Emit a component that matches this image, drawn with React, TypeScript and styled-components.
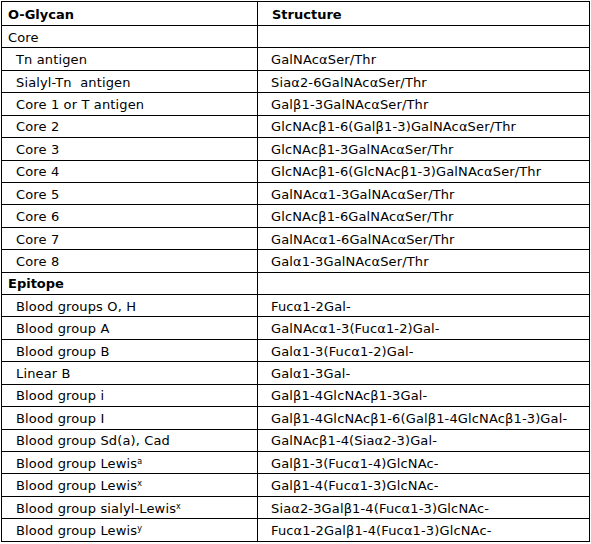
import React, { FunctionComponent } from 'react';
import styled, { createGlobalStyle } from 'styled-components';

const GlobalStyle = createGlobalStyle`
    body {
        margin: 0;
        background: #fff;
        font-family: "DejaVu Sans", Verdana, sans-serif;
        color: #000;
    }
`;

const Wrapper = styled.div`
    padding: 1px 0 0 1px;
`;

const Table = styled.table`
    border-collapse: collapse;
    width: 589px;
    height: 541px;
    font-size: 13px;
    letter-spacing: 0.14px;
    table-layout: fixed;
`;

const HeadCell = styled.th<{ $second?: boolean }>`
    border: 1px solid #000;
    text-align: left;
    font-weight: bold;
    letter-spacing: 0;
    padding: 1px 0 0 ${p => (p.$second ? 14 : 6)}px;
    height: 22px;
    white-space: pre;
`;

const Cell = styled.td<{ $second?: boolean; $indent?: boolean; $bold?: boolean }>`
    border: 1px solid #000;
    padding: 1px 0 0 ${p => (p.$second ? 13 : p.$indent ? 14 : 6)}px;
    font-weight: ${p => (p.$bold ? 'bold' : 'normal')};
    letter-spacing: ${p => (p.$bold ? 0 : 0.14)}px;
    white-space: pre;
    vertical-align: middle;
`;

const Sup = styled.sup`
    font-size: 8px;
    vertical-align: 4px;
    line-height: 0;
`;

interface RowData {
    name: React.ReactNode;
    structure?: string;
    section?: boolean;
    bold?: boolean;
}

const rows: RowData[] = [
    { name: 'Core', section: true },
    { name: 'Tn antigen', structure: 'GalNAcαSer/Thr' },
    { name: 'Sialyl-Tn  antigen', structure: 'Siaα2-6GalNAcαSer/Thr' },
    { name: 'Core 1 or T antigen', structure: 'Galβ1-3GalNAcαSer/Thr' },
    { name: 'Core 2', structure: 'GlcNAcβ1-6(Galβ1-3)GalNAcαSer/Thr' },
    { name: 'Core 3', structure: 'GlcNAcβ1-3GalNAcαSer/Thr' },
    { name: 'Core 4', structure: 'GlcNAcβ1-6(GlcNAcβ1-3)GalNAcαSer/Thr' },
    { name: 'Core 5', structure: 'GalNAcα1-3GalNAcαSer/Thr' },
    { name: 'Core 6', structure: 'GlcNAcβ1-6GalNAcαSer/Thr' },
    { name: 'Core 7', structure: 'GalNAcα1-6GalNAcαSer/Thr' },
    { name: 'Core 8', structure: 'Galα1-3GalNAcαSer/Thr' },
    { name: 'Epitope', section: true, bold: true },
    { name: 'Blood groups O, H', structure: 'Fucα1-2Gal-' },
    { name: 'Blood group A', structure: 'GalNAcα1-3(Fucα1-2)Gal-' },
    { name: 'Blood group B', structure: 'Galα1-3(Fucα1-2)Gal-' },
    { name: 'Linear B', structure: 'Galα1-3Gal-' },
    { name: 'Blood group i', structure: 'Galβ1-4GlcNAcβ1-3Gal-' },
    { name: 'Blood group I', structure: 'Galβ1-4GlcNAcβ1-6(Galβ1-4GlcNAcβ1-3)Gal-' },
    { name: 'Blood group Sd(a), Cad', structure: 'GalNAcβ1-4(Siaα2-3)Gal-' },
    { name: <>Blood group Lewis<Sup>a</Sup></>, structure: 'Galβ1-3(Fucα1-4)GlcNAc-' },
    { name: <>Blood group Lewis<Sup>x</Sup></>, structure: 'Galβ1-4(Fucα1-3)GlcNAc-' },
    { name: <>Blood group sialyl-Lewis<Sup>x</Sup></>, structure: 'Siaα2-3Galβ1-4(Fucα1-3)GlcNAc-' },
    { name: <>Blood group Lewis<Sup>y</Sup></>, structure: 'Fucα1-2Galβ1-4(Fucα1-3)GlcNAc-' },
];

const App: FunctionComponent = () => {
    return (
        <Wrapper>
            <GlobalStyle />
            <Table>
                <colgroup>
                    <col style={{ width: 256 }} />
                    <col />
                </colgroup>
                <thead>
                    <tr>
                        <HeadCell>O-Glycan</HeadCell>
                        <HeadCell $second>Structure</HeadCell>
                    </tr>
                </thead>
                <tbody>
                    {rows.map((r, i) => (
                        <tr key={i}>
                            <Cell $indent={!r.section} $bold={r.bold}>{r.name}</Cell>
                            <Cell $second>{r.structure || ''}</Cell>
                        </tr>
                    ))}
                </tbody>
            </Table>
        </Wrapper>
    );
};

export default App;
